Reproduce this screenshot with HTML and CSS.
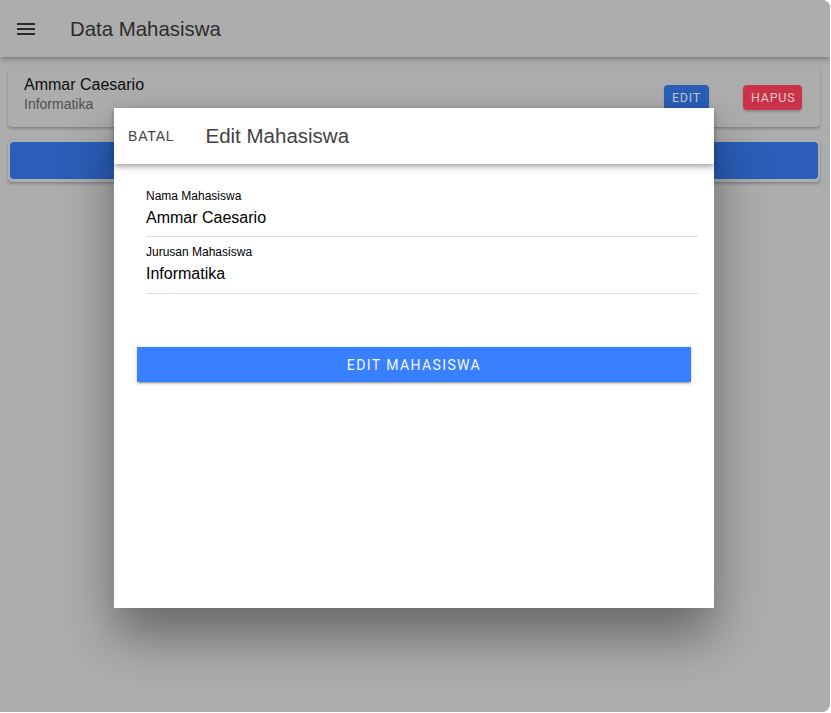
FILE: index.html
```html
<!DOCTYPE html>
<html lang="id">
<head>
<meta charset="utf-8">
<title>Data Mahasiswa</title>
<link rel="stylesheet" href="styles.css">
</head>
<body>
<div class="app">
  <header class="toolbar">
    <svg class="menu-icon" width="18" height="12" viewBox="0 0 18 12" aria-hidden="true">
      <rect x="0" y="0" width="18" height="2" fill="#2b2b2b"/>
      <rect x="0" y="5" width="18" height="2" fill="#2b2b2b"/>
      <rect x="0" y="10" width="18" height="2" fill="#2b2b2b"/>
    </svg>
    <h1 class="toolbar-title">Data Mahasiswa</h1>
  </header>

  <main class="content">
    <div class="card student">
      <div class="student-info">
        <div class="student-name">Ammar Caesario</div>
        <div class="student-major">Informatika</div>
      </div>
      <div class="student-actions">
        <button class="btn-small btn-edit">EDIT</button>
        <button class="btn-small btn-delete">HAPUS</button>
      </div>
    </div>
    <div class="card add-card">
      <button class="btn-add"></button>
    </div>
  </main>

  <div class="modal">
    <div class="modal-header">
      <span class="modal-cancel">BATAL</span>
      <h2 class="modal-title">Edit Mahasiswa</h2>
    </div>
    <div class="modal-body">
      <div class="field">
        <label class="field-label">Nama Mahasiswa</label>
        <div class="field-value">Ammar Caesario</div>
      </div>
      <div class="field">
        <label class="field-label">Jurusan Mahasiswa</label>
        <div class="field-value">Informatika</div>
      </div>
      <button class="btn-submit">EDIT MAHASISWA</button>
    </div>
  </div>
</div>
</body>
</html>
```

FILE: styles.css
```css
html, body {
  margin: 0;
  padding: 0;
  background: #ffffff;
}

body {
  font-family: "Liberation Sans", Arial, sans-serif;
}

.app {
  position: relative;
  width: 830px;
  height: 712px;
  background: #adadad;
  border-radius: 0 8px 8px 0;
  overflow: hidden;
}

.toolbar {
  height: 57px;
  display: flex;
  align-items: center;
  padding-left: 17px;
  box-sizing: border-box;
  background: #adadad;
  box-shadow: 0 2px 4px -1px rgba(0,0,0,0.2), 0 4px 5px 0 rgba(0,0,0,0.12);
  position: relative;
  z-index: 1;
}

.menu-icon {
  display: block;
  margin-top: 1px;
}

.toolbar-title {
  margin: 0 0 0 35px;
  font-size: 20.4px;
  font-weight: normal;
  color: #2c2c2c;
  line-height: 24px;
}

.content {
  padding: 11px 10px 0 8px;
  display: flex;
  flex-direction: column;
  gap: 13px;
}

.card {
  background: #adadad;
  border-radius: 4px;
  box-shadow: 0 2px 3px rgba(0,0,0,0.22), 0 0 1px rgba(0,0,0,0.15);
}

.student {
  height: 59px;
  box-sizing: border-box;
  padding: 7px 18px 0 16px;
  display: flex;
  justify-content: space-between;
}

.student-name {
  font-size: 16px;
  line-height: 20px;
  color: #0d0d0d;
}

.student-major {
  font-size: 14px;
  line-height: 18px;
  color: #505050;
}

.student-actions {
  display: flex;
  gap: 34px;
  margin-top: 10px;
  align-self: flex-start;
}

.btn-small {
  height: 25px;
  border: none;
  border-radius: 4px;
  font-family: Roboto, "Liberation Sans", sans-serif;
  font-size: 12.5px;
  letter-spacing: 0.06em;
  padding: 0 8px;
  box-shadow: 0 2px 2px rgba(0,0,0,0.18);
}

.btn-edit {
  background: #2a5eb8;
  color: #c3cad6;
  width: 45px;
}

.btn-delete {
  background: #c8334a;
  color: #e5c3c8;
  width: 59px;
}

.add-card {
  height: 42px;
  padding: 2px;
  box-sizing: border-box;
}

.btn-add {
  display: block;
  width: 100%;
  height: 37px;
  border: none;
  border-radius: 4px;
  background: #2a5eb8;
}

.modal {
  position: absolute;
  left: 114px;
  top: 108px;
  width: 600px;
  height: 500px;
  background: #ffffff;
  box-shadow: 0 28px 48px rgba(0,0,0,0.4);
  z-index: 5;
}

.modal-header {
  height: 56px;
  display: flex;
  align-items: center;
  padding-left: 14px;
  background: #ffffff;
  box-shadow: 0 2px 4px -1px rgba(0,0,0,0.2), 0 4px 5px 0 rgba(0,0,0,0.14), 0 1px 10px 0 rgba(0,0,0,0.12);
  position: relative;
}

.modal-cancel {
  font-size: 14px;
  color: #444444;
  letter-spacing: 0.06em;
}

.modal-title {
  margin: 0 0 0 31px;
  font-size: 20.5px;
  font-weight: normal;
  color: #424242;
}

.modal-body {
  padding: 17px 16px 0 32px;
  display: flex;
  flex-direction: column;
}

.field {
  padding: 8px 0 8px 0;
  border-bottom: 1px solid #dcdcdc;
  display: flex;
  flex-direction: column;
  gap: 5px;
}

.field + .field {
  padding-bottom: 9px;
}

.field-label {
  font-size: 12px;
  line-height: 14px;
  color: #000000;
}

.field-value {
  font-size: 16px;
  line-height: 20px;
  color: #000000;
}

.btn-submit {
  margin: 53px 7px 0 -9px;
  height: 35px;
  border: none;
  border-radius: 0;
  background: #3880ff;
  color: #f4f8ff;
  font-family: Roboto, "Liberation Sans", sans-serif;
  font-size: 14px;
  letter-spacing: 0.1em;
  box-shadow: 0 3px 1px -2px rgba(0,0,0,0.2), 0 2px 2px 0 rgba(0,0,0,0.14), 0 1px 5px 0 rgba(0,0,0,0.12);
}
```
